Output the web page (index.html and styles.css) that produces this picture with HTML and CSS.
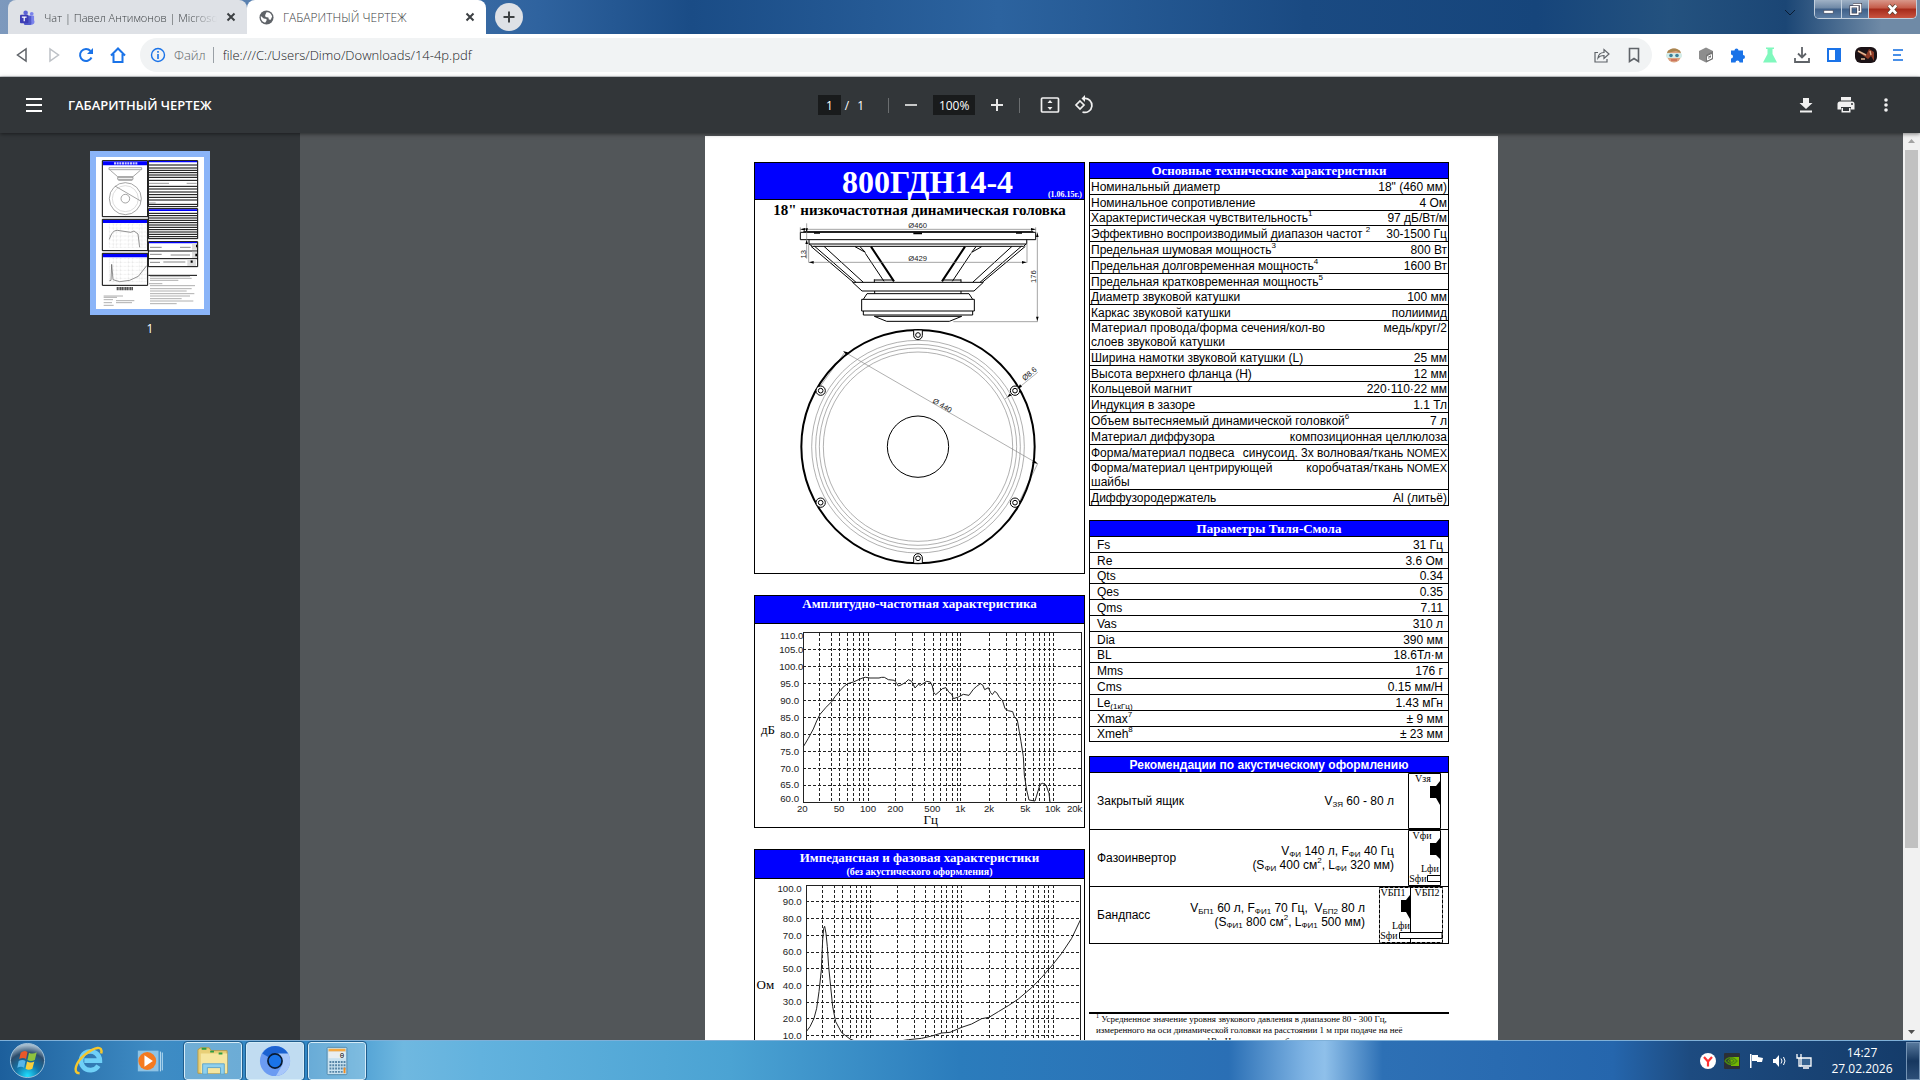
FILE: index.html
```
<!DOCTYPE html>
<html lang="ru">

<head>
  <meta charset="UTF-8">
  <title>ГАБАРИТНЫЙ ЧЕРТЕЖ</title>
  <link rel="stylesheet" href="styles.css">
</head>

<body>
  <header class="titlebar">
    <div class="tab">
      <svg class="tab-icon" viewBox="0 0 16 16"><circle cx="6" cy="3" r="2.4" fill="#5b62d6"/><circle cx="12.500" cy="4" r="2" fill="#7b83eb"/><path d="M9 6h6v5a3 3 0 0 1-6 3z" fill="#7b83eb"/><path d="M4 6h8v6a4 4 0 0 1-8 2z" fill="#5059c9"/><rect y="5" width="9" height="9" rx="1" fill="#3d3db5"/><path d="M2 7.500h5M4.500 7.500V12" stroke="#fff" stroke-width="1.300"/></svg>
      <span class="tab-text fade">Чат | Павел Антимонов | Microsof</span>
      <button class="tab-close" aria-label="Закрыть"><svg viewBox="0 0 10 10"><path d="M1.500 1.500l7 7M8.500 1.500l-7 7"/></svg></button>
    </div>
    <div class="tab active">
      <svg class="tab-icon" viewBox="0 0 16 16"><circle cx="8" cy="8" r="7.500" fill="#5f6368"/><path d="M2 6.500l3 2.500 3 .5v2l-1.500 2C3.500 13 1.500 10 2 6.500zM8 2.500c3-.5 5.500 2 6 4.500l-1.500 3.500-2-.5-.5-2-3-.5-.5-2z" fill="#fff"/></svg>
      <span class="tab-text">ГАБАРИТНЫЙ ЧЕРТЕЖ</span>
      <button class="tab-close" aria-label="Закрыть"><svg viewBox="0 0 10 10"><path d="M1.500 1.500l7 7M8.500 1.500l-7 7"/></svg></button>
    </div>
    <button class="new-tab" aria-label="Новая вкладка"><svg viewBox="0 0 14 14"><path d="M7 1.500v11M1.500 7h11"/></svg></button>
    <svg class="tab-search" viewBox="0 0 12 8"><path d="M1 1l5 5 5-5"/></svg>
    <div class="window-buttons">
      <button aria-label="Свернуть"><svg viewBox="0 0 14 14"><rect x="2" y="8" width="10" height="3" fill="#fff" stroke="#445" stroke-width=".6"/></svg></button>
      <button aria-label="Восстановить"><svg viewBox="0 0 14 14"><path d="M4.500 1.500h8v8h-3M2 4h7.500v8H2z" fill="none" stroke="#445" stroke-width="3"/><path d="M4.500 1.500h8v8h-3M2 4h7.500v8H2z" fill="none" stroke="#fff" stroke-width="1.600"/></svg></button>
      <button class="close" aria-label="Закрыть окно"><svg viewBox="0 0 14 14"><path d="M3 2.500l8 9M11 2.500l-8 9" stroke="#543" stroke-width="4.400"/><path d="M3 2.500l8 9M11 2.500l-8 9" stroke="#fff" stroke-width="3"/></svg></button>
    </div>
  </header>

  <nav class="navbar">
    <button class="nav-btn" aria-label="Назад"><svg viewBox="0 0 16 16"><path d="M12 2v12L3.500 8z" fill="none" stroke="#5f6368" stroke-width="1.500"/></svg></button>
    <button class="nav-btn" aria-label="Вперёд"><svg viewBox="0 0 16 16"><path d="M4 2v12l8.500-6z" fill="none" stroke="#bdc1c6" stroke-width="1.500"/></svg></button>
    <button class="nav-btn" aria-label="Обновить"><svg viewBox="0 0 16 16"><path d="M13.500 10.500a6 6 0 1 1-1-6.500" fill="none" stroke="#1a73e8" stroke-width="2"/><path d="M15 1v6H9z" fill="#1a73e8"/></svg></button>
    <button class="nav-btn" aria-label="Домой"><svg viewBox="0 0 16 16"><path d="M1 8.500L8 1.500l7 7M3.500 7v8h9V7" fill="none" stroke="#1a73e8" stroke-width="2"/></svg></button>
    <div class="omnibox">
      <svg class="info" viewBox="0 0 16 16"><circle cx="8" cy="8" r="6.500" fill="none" stroke="#1a73e8" stroke-width="1.400"/><path d="M8 7v5M8 4v1.700" stroke="#1a73e8" stroke-width="1.600"/></svg>
      <label class="scheme" for="url">Файл</label>
      <input id="url" class="url" type="text" value="file:///C:/Users/Dimo/Downloads/14-4p.pdf">
      <button class="nav-btn" aria-label="Поделиться"><svg viewBox="0 0 16 16" fill="none" stroke="#5f6368" stroke-width="1.200"><path d="M4 5.500H1V15h12v-3M4 11c.5-4 3-5.500 6-5.500V2.500L15 7l-5 4.500v-3C7.500 8.500 5.500 9 4 11z"/></svg></button>
      <button class="nav-btn" aria-label="В закладки"><svg viewBox="0 0 16 16"><path d="M3.500 1.500h9v13L8 11.500l-4.500 3z" fill="none" stroke="#5f6368" stroke-width="1.600"/></svg></button>
    </div>
    <div class="extensions">
      <button class="nav-btn" aria-label="Расширение"><svg viewBox="0 0 16 16"><circle cx="8" cy="8.500" r="7" fill="#dba380"/><path d="M1 6C2 0 14 0 15 6L10 4z" fill="#a88550"/><rect y="6" width="16" height="5" rx="2" fill="#d4ece8"/><circle cx="5" cy="8.500" r="1.800" fill="#3d819a"/><circle cx="11" cy="8.500" r="1.800" fill="#3d819a"/><path d="M5 13h6" stroke="#c04a3a"/></svg></button>
      <button class="nav-btn" aria-label="Расширение"><svg viewBox="0 0 16 16"><path d="M8 .5l7 3.500v8l-7 3.500L1 12V4z" fill="#8d8d8d"/><path d="M8 8l7-4v8l-7 3.500z" fill="#777"/><path d="M9.500 9.500l4-2v3.500l-4 2zM9.500 11h4" fill="none" stroke="#fff"/></svg></button>
      <button class="nav-btn" aria-label="Расширения"><svg viewBox="0 0 16 16"><path d="M1 3.500h3.500a2 2 0 1 1 4 0H13V8a2 2 0 1 1 0 4v3.500H9.500a2 2 0 0 0-4 0H1V11.500a2 2 0 0 0 0-4z" fill="#1a73e8"/></svg></button>
      <button class="nav-btn" aria-label="Эксперименты"><svg viewBox="0 0 16 16"><path d="M4 .5h8V2h-1.500v5l4.500 8.500H1L5.500 7V2H4z" fill="#80f8bd"/></svg></button>
      <button class="nav-btn" aria-label="Загрузки"><svg viewBox="0 0 16 16"><path d="M8 0v10M4 6.500l4 4 4-4M1 11v4h14v-4" fill="none" stroke="#5f6368" stroke-width="1.800"/></svg></button>
      <button class="nav-btn" aria-label="Боковая панель"><svg viewBox="0 0 16 16"><path d="M1 1h14v14H1zM3 3v10h6V3z" fill="#1a73e8" fill-rule="evenodd"/></svg></button>
      <button class="nav-btn" aria-label="Профиль"><svg class="avatar" viewBox="0 0 22 16"><rect width="22" height="16" rx="6" fill="#1b1216"/><path d="M2 4l9 4 3-6 5 3v9l-3-5-3 3z" fill="#8c3a26"/><path d="M3 4l8 4M15 4l1 4M6 12h4" stroke="#e2b694" stroke-width="1.400"/></svg></button>
      <button class="nav-btn" aria-label="Меню"><svg viewBox="0 0 16 16"><path d="M3 3h10M3 8h8M3 13h10" stroke="#4a90e8" stroke-width="2"/></svg></button>
    </div>
  </nav>

  <div class="pdf-toolbar">
    <div class="bar-left">
      <button class="menu-btn" aria-label="Меню"><svg viewBox="0 0 16 14"><path d="M0 1h16M0 7h16M0 13h16" stroke="#fff" stroke-width="2"/></svg></button>
      <h1>ГАБАРИТНЫЙ ЧЕРТЕЖ</h1>
    </div>
    <div class="bar-center">
      <input class="page-input" type="text" value="1" aria-label="Страница">
      <span class="page-count"><span>/</span><span>1</span></span>
      <span class="divider"></span>
      <button class="bar-btn" aria-label="Уменьшить"><svg viewBox="0 0 20 20"><path d="M4 10h12" stroke="#c8c9c9" stroke-width="2"/></svg></button>
      <input class="zoom-input" type="text" value="100%" aria-label="Масштаб">
      <button class="bar-btn" aria-label="Увеличить"><svg viewBox="0 0 20 20"><path d="M4 10h12M10 4v12" stroke="#e8e8e8" stroke-width="2"/></svg></button>
      <span class="divider"></span>
      <button class="bar-btn fit" aria-label="По размеру страницы"><svg viewBox="0 0 20 20"><rect x="1.500" y="3" width="17" height="14" rx="1" fill="none" stroke="#f1f1f1" stroke-width="1.700"/><path d="M10 5l2.500 3h-5zM10 15l2.500-3h-5z" fill="#f1f1f1"/></svg></button>
      <button class="bar-btn" aria-label="Повернуть"><svg viewBox="0 0 20 20" fill="none" stroke="#f1f1f1" stroke-width="1.700"><path d="M6 6l4 4-4 4-4-4z"/><path d="M10 3.500a7 7 0 1 1-1.500 13.500"/><path d="M11 0L7.500 3.500 11 7z" fill="#f1f1f1" stroke="none"/></svg></button>
    </div>
    <div class="bar-right">
      <button class="bar-btn" aria-label="Скачать"><svg viewBox="0 0 20 20"><path d="M7 3h6v5h3.500L10 14 3.500 8H7zM4 15.500h12v2H4z" fill="#f1f1f1"/></svg></button>
      <button class="bar-btn" aria-label="Печать"><svg viewBox="0 0 20 20"><path d="M5 2h10v3.500H5zM4 6.500h12q2.500 0 2.500 2.500v5.500H15V12H5v2.500H1.500V9q0-2.500 2.500-2.500zM5.500 13h9v4.500h-9z" fill="#f1f1f1"/><path d="M7 12h6v4H7z" fill="#323639"/><circle cx="16" cy="9" r="1" fill="#323639"/></svg></button>
      <button class="bar-btn" aria-label="Ещё"><svg viewBox="0 0 20 20"><circle cx="10" cy="5" r="1.800" fill="#f1f1f1"/><circle cx="10" cy="10" r="1.800" fill="#f1f1f1"/><circle cx="10" cy="15" r="1.800" fill="#f1f1f1"/></svg></button>
    </div>
  </div>

  <main class="viewer">
    <aside class="sidebar">
      <svg class="thumb" viewBox="78 51 324 456">
        <g fill="none" stroke="#000" stroke-width="3">
          <path d="M97 62h136v168H97zM97 238h136v94H97zM97 340h136v96H97zM235 62h148v138H235zM235 206h148v90H235zM235 305h148v75H235zM235 333h148M235 356h148"/>
          <path d="M235 406h146"/>
          <path d="M237 75h144M237 84h144M237 91h144M237 98h144M237 105h144M237 112h144M237 121h144M237 139h144M237 147h144M237 156h144M237 164h144M237 172h144M237 180h144M237 193h144M237 220h144M237 227h144M237 234h144M237 241h144M237 248h144M237 255h144M237 262h144M237 269h144M237 276h144M237 283h144M237 290h144"/>
          <path d="M237 130h60M350 130h30M237 189h20" stroke="#999"/>
        </g>
        <path d="M99 64h132v12H99zM99 240h132v9H99zM99 342h132v10H99zM237 63h144v4H237zM237 208h144v5H237zM237 306h144v4H237z" fill="#00f"/>
        <path d="M132 70h72" stroke="#ccf" stroke-width="7" stroke-dasharray="6 2"/>
        <g fill="none" stroke="#777" stroke-width="2">
          <path d="M117 83h98v6h-98zM121 91l22 19h46l22-19M143 112h46v6h-46zM145 121h42" />
          <circle cx="166" cy="176" r="48"/><circle cx="166" cy="176" r="39" stroke="#ccc"/><circle cx="166" cy="176" r="13"/><path d="M135 138l77 45"/>
          <path d="M118 298c7-20 12-26 24-27l40 6 10-4 12 9 5 40M118 422l5-1 2-48 4 46 20 6 30-4 26-12 25-32" stroke="#555"/>
        </g>
        <g stroke="#bbb" stroke-dasharray="2 2"><path d="M118 252h112v70H118zM118 264h112M118 276h112M118 288h112M118 300h112M118 312h112M130 252v70M139 252v70M151 252v70M175 252v70M187 252v70M208 252v70M216 252v70M118 355h112v70H118zM118 367h112M118 379h112M118 391h112M118 403h112M118 415h112M130 355v70M139 355v70M151 355v70M175 355v70M187 355v70M208 355v70M216 355v70" fill="none"/></g>
        <path d="M140 446h49" stroke="#555" stroke-width="10" stroke-dasharray="4 1"/>
        <path d="M240 322h35M330 322h32M240 343h35M302 345h58M240 367h30M280 366h66" stroke="#888" stroke-width="3"/>
        <path d="M366 310h15v19h-15zM366 335h15v19h-15zM352 358h26v20h-26z" fill="#ddd"/><path d="M378 318h3M376 345h5M362 365h6" stroke="#000" stroke-width="7"/>
        <path d="M240 409h120M240 415h125M240 421h85M237 431h40M240 437h135M240 446h125M240 453h110M240 461h133M240 468h120M240 476h95M240 483h130M240 491h80M101 468h58M101 472h40M101 479h28M138 482h55M101 488h25M138 488h48M101 496h30" stroke="#888" stroke-width="2"/>
      </svg>
      <span class="thumb-label">1</span>
    </aside>

    <div class="canvas">
      <article class="sheet">
        <div class="column left">
          <section class="box">
            <div class="model">
              <h2>800ГДН14-4</h2>
              <span class="date">(1.06.15г.)</span>
            </div>
            <p class="subtitle">18" низкочастотная динамическая головка</p>
            <svg class="drawing" viewBox="45 240 987 1059">
              <!-- side view -->
              <g fill="none" stroke="#000" stroke-width="3">
                <path d="M181 277H887V299H181zM190 275H880M207 299V312L217 319H851L860 310V299M207 312H860"/>
                <path d="M213 319L340 427M224 319L348 427M252 319L370 427M856 319L727 427M844 319L720 427M816 319L698 427M345 320L376 337L360 320M376 340L432 424M725 320L695 337L708 320M693 340L637 424"/>
                <path d="M338 427H730L702 453H366zM381 461H687L698 478M381 461L370 478M365 478H703V513H365zM370 513V525H698V513M403 529L440 544H628L665 529zM404 453V461M663 453V461M403 420H460M610 420H663M403 418V427M663 418V427"/>
                <path d="M393 320L462 424M675 320L606 424" stroke-width="6"/>
                <path d="M222 279h18M520 280h26M828 279h18" stroke-width="5"/>
              </g>
              <g fill="none" stroke="#777" stroke-width="2">
                <path d="M181 268H887M181 262v15M887 262v15M200 250v106M206 300v68M861 300v68M207 367H860M892 277v268M640 545H893"/>
              </g>
              <path d="M181 268l14-4v8zM887 268l-14-4v8zM207 367l14-4v8zM860 367l-14-4v8zM892 278l-4 13h8zM892 543l-4-13h8zM200 277l-4-12h8zM200 300l-4 12h8z"/>
              <g class="dim">
                <text x="533" y="263">Ø460</text>
                <text x="533" y="362">Ø429</text>
                <text transform="translate(197 343) rotate(-90)">13</text>
                <text transform="translate(887 410) rotate(-90)">176</text>
                <text transform="translate(603 803) rotate(30)">Ø 440</text>
                <text transform="translate(873 707) rotate(-40)">Ø8.6</text>
              </g>
              <!-- front view -->
              <g fill="none" stroke="#888" stroke-width="2">
                <circle cx="534" cy="920" r="319"/><circle cx="534" cy="920" r="307"/><circle cx="534" cy="920" r="296"/><circle cx="534" cy="920" r="284"/>
                <path d="M310 634L893 971M240 740L315 636M838 1085L893 971M795 777L893 697"/>
              </g>
              <g fill="none" stroke="#000" stroke-width="3">
                <circle cx="534" cy="920" r="350" stroke-width="6"/>
                <circle cx="534" cy="920" r="92"/>
              </g>
              <g fill="#fff" stroke="#000" stroke-width="3">
                <path d="M521 570v16a13 13 0 0 0 26 0v-16zM521 1270v-16a13 13 0 0 1 26 0v16z"/>
                <circle cx="242" cy="752" r="14"/><circle cx="825" cy="752" r="14"/><circle cx="242" cy="1088" r="14"/><circle cx="825" cy="1088" r="14"/>
                <circle cx="534" cy="585" r="7"/><circle cx="534" cy="1255" r="7"/><circle cx="242" cy="752" r="7"/><circle cx="825" cy="752" r="7"/><circle cx="242" cy="1088" r="7"/><circle cx="825" cy="1088" r="7"/>
              </g>
              <path d="M310 634l14 3-5 8zM893 971l-16-3 5-8zM832 747l8-14 6 7zM802 772l6-11 8 5z"/>
            </svg>
          </section>

          <section class="box">
            <h3 class="box-head">Амплитудно-частотная характеристика</h3>
            <svg class="chart" viewBox="30 117 987 609">
              <g class="grid">
                <path d="M175 193H1008M175 244H1008M175 295H1008M175 346H1008M175 397H1008M175 448H1008M175 499H1008M175 550H1008M175 601H1008"/>
                <path d="M223 143V652M260 143V652M284 143V652M307 143V652M325 143V652M343 143V652M355 143V652M370 143V652M452 143V652M501 143V652M537 143V652M565 143V652M586 143V652M604 143V652M621 143V652M637 143V652M646 143V652M732 143V652M783 143V652M815 143V652M841 143V652M864 143V652M882 143V652M899 143V652M913 143V652M925 143V652"/>
              </g>
              <path class="frame" d="M175 143H1008V652H175z"/>
              <polyline class="curve" points="175,485 190,460 205,432 215,408 225,388 243,367 260,350 270,335 284,318 298,303 308,296 325,291 343,283 355,278 362,277 375,279 402,279 410,277 418,277 430,284 448,286 455,295 460,303 468,300 482,292 490,284 500,289 510,309 520,298 526,301 545,289 556,291 562,303 566,322 572,329 585,318 592,311 603,308 612,322 620,327 625,341 640,336 655,328 672,331 685,313 695,304 706,296 713,300 719,314 730,308 737,323 742,329 749,319 755,323 764,338 772,345 780,371 790,377 803,380 808,395 817,405 823,440 828,470 835,515 838,570 845,615 852,645 870,648 880,615 885,598 893,595 903,600 912,625 915,652"/>
              <g class="ticks-y">
                <text x="175" y="163">110.0</text><text x="175" y="204">105.0</text><text x="175" y="255">100.0</text><text x="162" y="306">95.0</text><text x="162" y="357">90.0</text><text x="162" y="407">85.0</text><text x="162" y="459">80.0</text><text x="162" y="509">75.0</text><text x="162" y="560">70.0</text><text x="162" y="610">65.0</text><text x="162" y="652">60.0</text>
              </g>
              <g class="ticks-x">
                <text x="172" y="681">20</text><text x="282" y="681">50</text><text x="369" y="681">100</text><text x="451" y="681">200</text><text x="562" y="681">500</text><text x="646" y="681">1k</text><text x="732" y="681">2k</text><text x="841" y="681">5k</text><text x="923" y="681">10k</text><text x="989" y="681">20k</text>
              </g>
              <g class="unit"><text x="69" y="447">дБ</text><text x="557" y="717">Гц</text></g>
            </svg>
          </section>

          <section class="box">
            <h3 class="box-head">Импедансная и фазовая характеристики<small>(без акустического оформления)</small></h3>
            <svg class="chart" viewBox="30 117 987 609">
              <g class="grid">
                <path d="M184 184H1007M184 236H1007M184 286H1007M184 336H1007M184 386H1007M184 436H1007M184 486H1007M184 535H1007M184 587H1007"/>
                <path d="M233 136V637M269 136V637M293 136V637M315 136V637M334 136V637M349 136V637M363 136V637M376 136V637M457 136V637M508 136V637M541 136V637M569 136V637M588 136V637M604 136V637M621 136V637M637 136V637M650 136V637M733 136V637M782 136V637M815 136V637M841 136V637M865 136V637M881 136V637M899 136V637M911 136V637M924 136V637"/>
              </g>
              <path class="frame" d="M184 136H1007V637H184z"/>
              <polyline class="curve" points="184,575 195,560 207,535 215,505 222,455 229,390 233,300 236,265 239,259 243,280 247,320 251,380 257,440 263,500 272,545 290,578 315,597 340,607 420,610 490,599 530,595 560,588 590,579 615,577 650,562 680,552 710,536 732,532 760,515 790,497 820,477 860,443 890,412 920,378 950,340 980,295 1007,238"/>
              <g class="ticks-y">
                <text x="170" y="155">100.0</text><text x="170" y="195">90.0</text><text x="170" y="246">80.0</text><text x="170" y="296">70.0</text><text x="170" y="346">60.0</text><text x="170" y="396">50.0</text><text x="170" y="446">40.0</text><text x="170" y="496">30.0</text><text x="170" y="545">20.0</text><text x="170" y="596">10.0</text>
              </g>
              <g class="unit"><text x="61" y="447">Ом</text></g>
            </svg>
          </section>
        </div>

        <div class="column right">
          <table class="specs">
            <thead><tr><th colspan="2">Основные технические характеристики</th></tr></thead>
            <tbody>
              <tr><td>Номинальный диаметр</td><td>18" (460 мм)</td></tr>
              <tr><td>Номинальное сопротивление</td><td>4 Ом</td></tr>
              <tr><td>Характеристическая чувствительность<sup>1</sup></td><td>97 дБ/Вт/м</td></tr>
              <tr><td>Эффективно воспроизводимый диапазон частот <sup>2</sup></td><td>30-1500 Гц</td></tr>
              <tr><td>Предельная шумовая мощность<sup>3</sup></td><td>800 Вт</td></tr>
              <tr><td>Предельная долговременная мощность<sup>4</sup></td><td>1600 Вт</td></tr>
              <tr><td>Предельная кратковременная мощность<sup>5</sup></td><td></td></tr>
              <tr><td>Диаметр звуковой катушки</td><td>100 мм</td></tr>
              <tr><td>Каркас звуковой катушки</td><td>полиимид</td></tr>
              <tr class="double"><td>Материал провода/форма сечения/кол-во<br>слоев звуковой катушки</td><td>медь/круг/2</td></tr>
              <tr><td>Ширина намотки звуковой катушки (L)</td><td>25 мм</td></tr>
              <tr><td>Высота верхнего фланца (H)</td><td>12 мм</td></tr>
              <tr><td>Кольцевой магнит</td><td>220·110·22 мм</td></tr>
              <tr><td>Индукция в зазоре</td><td>1.1 Тл</td></tr>
              <tr><td>Объем вытесняемый динамической головкой<sup>6</sup></td><td>7 л</td></tr>
              <tr><td>Материал диффузора</td><td>композиционная целлюлоза</td></tr>
              <tr><td>Форма/материал подвеса</td><td>синусоид. 3х волновая/ткань <span class="small">NOMEX</span></td></tr>
              <tr class="double"><td>Форма/материал центрирующей<br>шайбы</td><td>коробчатая/ткань <span class="small">NOMEX</span></td></tr>
              <tr><td>Диффузородержатель</td><td>Al (литьё)</td></tr>
            </tbody>
          </table>

          <table class="specs inset">
            <thead><tr><th colspan="2">Параметры Тиля-Смола</th></tr></thead>
            <tbody>
              <tr><td>Fs</td><td>31 Гц</td></tr>
              <tr><td>Re</td><td>3.6 Ом</td></tr>
              <tr><td>Qts</td><td>0.34</td></tr>
              <tr><td>Qes</td><td>0.35</td></tr>
              <tr><td>Qms</td><td>7.11</td></tr>
              <tr><td>Vas</td><td>310 л</td></tr>
              <tr><td>Dia</td><td>390 мм</td></tr>
              <tr><td>BL</td><td>18.6Тл·м</td></tr>
              <tr><td>Mms</td><td>176 г</td></tr>
              <tr><td>Cms</td><td>0.15 мм/Н</td></tr>
              <tr><td>Le<sub>(1кГц)</sub></td><td>1.43 мГн</td></tr>
              <tr><td>Xmax<sup>7</sup></td><td>± 9 мм</td></tr>
              <tr><td>Xmeh<sup>8</sup></td><td>± 23 мм</td></tr>
            </tbody>
          </table>

          <table class="specs inset boxes">
            <thead><tr><th class="sans" colspan="2">Рекомендации по акустическому оформлению</th></tr></thead>
            <tbody>
              <tr>
                <td>Закрытый ящик</td>
                <td><div class="enclosure"><span>V<sub>ЗЯ</sub> 60 - 80 л</span>
                  <svg width="33" height="56" viewBox="0 0 33 56"><path class="edge" d="M.5 .5h32v55H.5z"/><path d="M22 13h6l4-5v24l-4-7h-6z"/><text x="15" y="9">Vзя</text></svg></div></td>
              </tr>
              <tr>
                <td>Фазоинвертор</td>
                <td><div class="enclosure"><span>V<sub>ФИ</sub> 140 л, F<sub>ФИ</sub> 40 Гц<br>(S<sub>ФИ</sub> 400 см<sup>2</sup>, L<sub>ФИ</sub> 320 мм)</span>
                  <svg width="33" height="56" viewBox="0 0 33 56"><path class="edge" d="M.5 .5h32v55H.5zM32 45.500H19.500v6H32"/><path d="M22 13h6l4-5v21l-4-4h-6z"/><text x="14" y="9">Vфи</text><text x="22" y="42">Lфи</text><text x="10" y="52">Sфи</text></svg></div></td>
              </tr>
              <tr>
                <td>Бандпасс</td>
                <td class="wide"><div class="enclosure"><span>V<sub>БП1</sub> 60 л, F<sub>ФИ1</sub> 70 Гц,&nbsp; V<sub>БП2</sub> 80 л<br>(S<sub>ФИ1</sub> 800 см<sup>2</sup>, L<sub>ФИ1</sub> 500 мм)</span>
                  <svg width="64" height="56" viewBox="0 0 64 56"><path class="edge" d="M.5 .5h63v55H.5z" stroke-dasharray="4 1"/><path class="edge" d="M31.500 0v56"/><path class="tube" d="M63 45.500H20.500v6H63z"/><path d="M22 13h5l4-5v24l-4-7h-5z"/><text x="14" y="9">VБП1</text><text x="48" y="9">VБП2</text><text x="22" y="42">Lфи</text><text x="10" y="52">Sфи</text></svg></div></td>
              </tr>
            </tbody>
          </table>

          <div class="footnotes">
            <p><sup>1</sup> Усредненное значение уровня звукового давления в диапазоне 80 - 300 Гц,<br>измеренного на оси динамической головки на расстоянии 1 м при подаче на неё<br>напряжения эквивалентного 1Вт. Напряжение выбирается в соответствии с</p>
          </div>
        </div>
      </article>
    </div>

    <div class="scrollbar">
      <svg viewBox="0 0 17 17"><path d="M5 10l3.500-4 3.500 4z" fill="#a3a3a3"/></svg>
      <div class="scroll-thumb"></div>
      <svg viewBox="0 0 17 17"><path d="M5 7l3.500 4L12 7z" fill="#505050"/></svg>
    </div>
  </main>

  <footer class="taskbar">
    <button class="start" aria-label="Пуск"><svg viewBox="0 0 38 38">
      <defs><radialGradient id="orb" cx=".5" cy=".95" r=".9"><stop offset="0" stop-color="#1fe0ff"/><stop offset=".4" stop-color="#1273a8"/><stop offset=".75" stop-color="#2c4c6c"/><stop offset="1" stop-color="#a5bccd"/></radialGradient></defs>
      <circle cx="19" cy="19" r="17.500" fill="url(#orb)" stroke="#9fc0d8"/>
      <path d="M12 11q4-3 7-.5l-1.500 7q-3-2-7 0z" fill="#e8582a"/><path d="M20.500 11q4 2 8-.5l-2 8q-4 2-7.500 0z" fill="#8ec23f"/><path d="M10 19.500q4-2 7 0l-1.500 7q-3-2-7 0z" fill="#58b6e8"/><path d="M18.500 20q4 2 7.500 0l-2 7.500q-4 2-7 0z" fill="#f9cf3c"/>
    </svg></button>
    <div class="tasks">
      <button class="task" aria-label="Internet Explorer"><svg viewBox="0 0 34 32"><path d="M27 21a10 10 0 1 1 1.500-5.500H12" fill="none" stroke="#6fd0f7" stroke-width="5"/><path d="M7 29C-1 29 3 17 13 9S32-1 30 8" fill="none" stroke="#f6c72c" stroke-width="2.600"/></svg></button>
      <button class="task" aria-label="Проигрыватель"><svg viewBox="0 0 34 32"><path d="M3 5h22v22H3z" fill="#8ec3e4"/><path d="M27 6v21M29 7v19" stroke="#c5e4f6"/><circle cx="13" cy="16" r="9.500" fill="#f47a20"/><path d="M10 10l9 6-9 6z" fill="#fff"/></svg></button>
      <button class="task open" aria-label="Проводник"><svg viewBox="0 0 34 32"><path d="M1 4l3-2h9l2 3h17v24H1z" fill="#e8cf77" stroke="#b89a44"/><path d="M4 8h28v21H4z" fill="#f6e6a0"/><path d="M5 3h5M14 6h4M23 8h4" stroke="#2b9c43" stroke-width="2"/><path d="M6 30V19h23v11h-4v-7H11v7z" fill="#8fd0ee" stroke="#5ea4c9"/></svg></button>
      <button class="task open current" aria-label="Chromium"><svg viewBox="0 0 34 34"><circle cx="17" cy="17" r="16" fill="#6b9bf2"/><path d="M17 17L3.500 9A16 16 0 0 1 31 9z" fill="#1b62d1"/><path d="M17 9h14a16 16 0 0 1-13 24l7-12z" fill="#a8c7fa"/><circle cx="17" cy="17" r="7.500" fill="#1a73e8" stroke="#081a33" stroke-width="1.800"/></svg></button>
      <button class="task open" aria-label="Калькулятор"><svg viewBox="0 0 34 32"><rect x="6.500" y="1.500" width="21" height="29" rx="1" fill="#c9e2f0" stroke="#4f87ab"/><path d="M8 3h18v3H8z" fill="#f3a944"/><path d="M8 6h18v7H8z" fill="#e9eef0"/><text x="20" y="13" font-size="8" font-family="Liberation Mono">0</text><path d="M9 17h17M9 20.500h17M9 24h17M9 27.500h14" stroke="#5584a6" stroke-width="2" stroke-dasharray="2 1"/><path d="M25 23v6" stroke="#f38b1d" stroke-width="2"/></svg></button>
    </div>
    <div class="tray">
      <svg viewBox="0 0 16 16"><circle cx="8" cy="8" r="8" fill="#fff"/><path d="M4 4l4 4.500L12 4M8 8v5.500" fill="none" stroke="#f33" stroke-width="2.200"/></svg>
      <svg viewBox="0 0 16 16"><rect width="16" height="16" rx="1" fill="#2b3036"/><path d="M6 4h9v9H7z" fill="#76b900"/><path d="M1 8c3-5 9-4 12 0-3 4-8 5-12 0zM4 8c2-3 5-2 6 0-2 2-4 2-6 0z" fill="none" stroke="#4c8a10" stroke-width="1.300"/></svg>
      <svg viewBox="0 0 16 16"><path d="M2 1h1.500v14H2zM4 2h6v2l5 1-1 4H9V8H4z" fill="#fff"/></svg>
      <svg viewBox="0 0 16 16"><path d="M1 6h2.500L7 2v12L3.500 10H1z" fill="#fff"/><path d="M9 5.500q2 2.500 0 5M11.500 4q3 4 0 8" fill="none" stroke="#fff"/></svg>
      <svg viewBox="0 0 16 16"><path d="M5 5h10v8H5zM7 15h6" fill="#35618f" stroke="#fff" stroke-width="1.300"/><path d="M1 1v4h4V1M3 5v8h2" fill="none" stroke="#fff" stroke-width="1.300"/></svg>
    </div>
    <div class="clock"><span>14:27</span><span>27.02.2026</span></div>
    <button class="show-desktop" aria-label="Свернуть все окна"></button>
  </footer>
</body>

</html>
```
FILE: styles.css
```
* {
  box-sizing: border-box;
}

body {
  margin: 0;
  height: 100vh;
  display: flex;
  flex-direction: column;
  overflow: hidden;
  font-family: "Open Sans", "Noto Sans", sans-serif;
  font-size: 12px;
  color: #000;
}

h1,
h2,
h3,
p {
  margin: 0;
}

button {
  display: flex;
  align-items: center;
  justify-content: center;
  padding: 0;
  border: none;
  background: none;
  cursor: pointer;
}

input {
  border: none;
  padding: 0;
  font-family: inherit;
}

/* window title bar with tabs */
.titlebar {
  flex: none;
  height: 34px;
  display: flex;
  align-items: flex-start;
  padding: 0 3px 0 8px;
  background: linear-gradient(90deg, #7d99bd 0, #2f639f 28%, #1a4c86 36%, #2c639f 52%, #1a4a82 68%, #16457b 80%, #24527f 87%, #1b4675 93%, #6f8aa6 98%);
}

.tab {
  width: 239px;
  height: 34px;
  display: flex;
  align-items: center;
  padding: 0 10px 0 12px;
  background: #dee1e6;
  border-radius: 8px 8px 0 0;
}

.tab.active {
  background: #fff;
}

.tab-icon {
  width: 15px;
  height: 15px;
  margin-right: 9px;
}

.tab-text {
  flex: 1;
  font-size: 12px;
  font-weight: 300;
  white-space: nowrap;
  overflow: hidden;
  color: #3c4043;
}

.tab-text.fade {
  font-size: 11px;
  mask-image: linear-gradient(90deg, #000 85%, transparent);
}

.tab-close {
  width: 12px;
  height: 12px;
  margin-left: 8px;
}

.tab-close svg {
  width: 10px;
  height: 10px;
  stroke: #3c4043;
  stroke-width: 2;
}

.new-tab {
  width: 28px;
  height: 28px;
  margin: 3px 0 0 9px;
  border-radius: 50%;
  background: #dee1e6;
}

.new-tab svg {
  width: 14px;
  height: 14px;
  stroke: #3c4043;
  stroke-width: 2;
}

.tab-search {
  width: 12px;
  height: 8px;
  margin: 9px 18px 0 auto;
  fill: none;
  stroke: #0a1c33;
  stroke-width: 1;
}

.window-buttons {
  display: flex;
  height: 19px;
  border: 1px solid #c3d0de;
  border-top: none;
  border-radius: 0 0 5px 5px;
  overflow: hidden;
}

.window-buttons button {
  width: 27px;
  border-right: 1px solid #c3d0de;
  background: linear-gradient(#a0b2c6, #6e88a6 45%, #3e5f88 50%, #5d7ea4);
}

.window-buttons .close {
  width: 47px;
  border: none;
  background: linear-gradient(#d9978a, #c45a48 45%, #a52a1a 50%, #c9533f);
}

.window-buttons svg {
  width: 13px;
  height: 13px;
}

/* address bar */
.navbar {
  flex: none;
  height: 43px;
  display: flex;
  align-items: center;
  padding: 0 6px;
  background: #fff;
  border-bottom: 1px solid #cfd2d5;
}

.nav-btn {
  width: 32px;
  height: 32px;
}

.nav-btn svg {
  width: 16px;
  height: 16px;
}

.nav-btn .avatar {
  width: 22px;
}

.omnibox {
  flex: 1;
  height: 34px;
  display: flex;
  align-items: center;
  margin: 0 6px;
  padding: 0 2px 0 10px;
  border-radius: 17px;
  background: #f1f3f4;
}

.info {
  width: 16px;
  height: 16px;
}

.scheme {
  margin-left: 8px;
  padding-right: 7px;
  border-right: 1px solid #9aa0a6;
  font-size: 13px;
  line-height: 16px;
  font-weight: 300;
  color: #5f6368;
}

.url {
  flex: 1;
  margin-left: 9px;
  background: none;
  font-size: 13px;
  font-weight: 300;
  color: #202124;
}

.extensions {
  display: flex;
}

/* pdf viewer */
.pdf-toolbar {
  flex: none;
  position: relative;
  height: 56px;
  display: grid;
  grid-template-columns: 1fr auto 1fr;
  align-items: center;
  padding: 0 22px 0 12px;
  background: #323639;
  color: #fff;
  box-shadow: 0 1px 4px rgba(0, 0, 0, 0.5);
}

.bar-left,
.bar-center,
.bar-right {
  display: flex;
  align-items: center;
}

.bar-left h1 {
  margin-left: 12px;
  font-size: 13px;
  font-weight: 600;
}

.menu-btn {
  width: 44px;
  height: 32px;
}

.menu-btn svg {
  width: 16px;
  height: 14px;
}

.bar-btn {
  width: 24px;
  height: 24px;
}

.bar-btn svg {
  width: 20px;
  height: 20px;
}

.bar-center {
  gap: 10px;
  margin-left: 4px;
}

.page-input,
.zoom-input {
  height: 20px;
  background: #191b1c;
  color: #fff;
  font-size: 12px;
  text-align: center;
}

.page-input {
  width: 23px;
}

.zoom-input {
  width: 42px;
}

.page-count {
  display: flex;
  gap: 8px;
  margin: 0 14px 0 -6px;
}

.divider {
  width: 1px;
  height: 15px;
  background: #6b6e70;
}

.fit {
  margin-left: 8px;
}

.bar-right {
  justify-content: flex-end;
  gap: 16px;
}

.viewer {
  flex: 1;
  min-height: 0;
  display: flex;
  background: #525659;
}

.sidebar {
  width: 300px;
  display: flex;
  flex-direction: column;
  align-items: center;
  padding-top: 18px;
  background: #323639;
  color: #fff;
}

.thumb {
  width: 120px;
  height: 164px;
  border: 6px solid #8ab4f8;
  background: #fff;
}

.thumb-label {
  margin-top: 5px;
  font-size: 12px;
}

.canvas {
  flex: 1;
  display: flex;
  justify-content: center;
  overflow: hidden;
  padding-top: 3px;
}

.sheet {
  width: 793px;
  height: 1123px;
  flex: none;
  display: grid;
  grid-template-columns: 331px minmax(0, 1fr);
  gap: 4px;
  padding: 26px 49px;
  background: #fff;
  font-family: "Liberation Sans", Arial, sans-serif;
}

.column {
  display: flex;
  flex-direction: column;
}

.left {
  gap: 21px;
}

.right {
  gap: 14px;
}

.box {
  border: 1px solid #000;
}

.box svg {
  display: block;
  width: 100%;
}

.model {
  display: flex;
  height: 37px;
  align-items: flex-end;
  background: #00f;
  border-bottom: 1px solid #000;
  color: #fff;
  font-family: "Liberation Serif", serif;
  font-weight: bold;
  position: relative;
}

.model h2 {
  flex: 1;
  padding-left: 16px;
  font-size: 32px;
  line-height: 34px;
  text-align: center;
}

.model .date {
  position: absolute;
  right: 2px;
  bottom: 0;
  font-size: 8px;
  line-height: 9px;
}

.subtitle {
  font: bold 15px/20px "Liberation Serif", serif;
  text-align: center;
}

.dim {
  font-size: 23px;
  text-anchor: middle;
  fill: #222;
}

.box-head {
  min-height: 28px;
  background: #00f;
  border-bottom: 1px solid #000;
  color: #fff;
  font: bold 13px/16px "Liberation Serif", serif;
  text-align: center;
}

.box-head small {
  display: block;
  font-size: 10px;
  line-height: 12px;
}

.grid path {
  fill: none;
  stroke: #222;
  stroke-width: 3;
  stroke-dasharray: 9 6;
  shape-rendering: crispEdges;
}

.frame {
  fill: none;
  stroke: #222;
  stroke-width: 3;
  shape-rendering: crispEdges;
}

.curve {
  fill: none;
  stroke: #222;
  stroke-width: 3;
}

.ticks-y,
.ticks-x {
  font-size: 29px;
  fill: #222;
}

.ticks-y {
  text-anchor: end;
}

.ticks-x,
.unit {
  text-anchor: middle;
}

.unit {
  font-family: "Liberation Serif", serif;
  font-size: 39px;
}

/* data tables */
.specs {
  width: 100%;
  border-collapse: collapse;
  font-size: 12px;
  line-height: 14px;
}

.specs tr {
  height: 16px;
  vertical-align: bottom;
}

.specs tbody tr:nth-child(5n+3) {
  height: 15px;
}

.specs tbody .double {
  height: 28px;
  line-height: 14px;
  vertical-align: top;
}

.specs th,
.specs td {
  border: 1px solid #000;
  padding: 0 1px;
  white-space: nowrap;
}

.specs th {
  background: #00f;
  color: #fff;
  font: bold 13px/14px "Liberation Serif", serif;
}

.specs .sans {
  font: bold 12px/14px "Liberation Sans", Arial, sans-serif;
}

/* long names may run on under the value column */
.specs td:first-child {
  max-width: 0;
  border-right: none;
}

.specs td:last-child {
  border-left: none;
  text-align: right;
}

.specs .small {
  font-size: 11px;
}

.specs.inset td:first-child {
  padding-left: 7px;
}

.specs.inset td:last-child {
  padding-right: 5px;
}

sup,
sub {
  font-size: 8px;
  line-height: 0;
}

sup {
  vertical-align: 6px;
}

sub {
  vertical-align: -2px;
}

.specs.boxes tbody tr {
  height: 57px;
  vertical-align: middle;
}

.specs.boxes td:last-child {
  padding-right: 7px;
}

.specs.boxes td.wide {
  padding-right: 5px;
}

.enclosure {
  display: flex;
  align-items: center;
  justify-content: flex-end;
  gap: 14px;
}

.enclosure text {
  font: 10px "Liberation Serif", serif;
  text-anchor: middle;
}

.edge {
  fill: none;
  stroke: #000;
  stroke-width: 1;
}

.tube {
  fill: #fff;
  stroke: #000;
}

.footnotes {
  margin-top: 54px;
  padding: 0 7px;
  border-top: 2px solid #000;
  font: 9px/11px "Liberation Serif", serif;
  white-space: nowrap;
}

.footnotes sup {
  font-size: 6px;
  vertical-align: 4px;
}

.scrollbar {
  width: 17px;
  display: flex;
  flex-direction: column;
  background: #f1f1f1;
}

.scrollbar svg {
  flex: none;
  width: 17px;
  height: 17px;
}

.scroll-thumb {
  flex: 4;
  margin: 0 2px;
  background: #c1c1c1;
}

.scrollbar::after {
  content: "";
  flex: 1;
  order: 1;
}

.scrollbar svg:last-child {
  order: 2;
}

/* taskbar */
.taskbar {
  flex: none;
  height: 40px;
  display: flex;
  align-items: center;
  border-top: 1px solid #7fb0d8;
  background: linear-gradient(90deg, #1c5f9c 0, #3f8cc4 8%, #2f87c6 16%, #6fb8e0 21%, #62b2de 25%, #4ba3d3 38%, #2b7cbc 50%, #2a6fb5 64%, #7fb4e4 68%, #8fc0ea 69%, #2d70b5 72%, #2566ad 84%, #1d4b80 88%, #143b69 100%);
}

.start {
  width: 54px;
}

.start svg {
  width: 37px;
  height: 37px;
}

.tasks {
  display: flex;
  gap: 4px;
  margin-left: 6px;
}

.task {
  width: 58px;
  height: 38px;
}

.task svg {
  width: 32px;
  height: 32px;
}

.task.open {
  border: 1px solid #d5ecf8;
  border-radius: 3px;
  outline: 1px solid #1f5d8d;
  outline-offset: 0;
  background: rgba(190, 225, 240, 0.4);
}

.task.current {
  background: rgba(240, 248, 255, 0.75);
}

.tray {
  display: flex;
  gap: 8px;
  margin-left: auto;
}

.tray svg {
  width: 16px;
  height: 16px;
}

.clock {
  width: 94px;
  display: flex;
  flex-direction: column;
  align-items: center;
  padding-left: 6px;
  line-height: 16px;
  color: #fff;
}

.show-desktop {
  width: 14px;
  height: 38px;
  border: 1px solid #7594b5;
  background: linear-gradient(#56789c, #16375f 50%, #2d4f78);
}
```
